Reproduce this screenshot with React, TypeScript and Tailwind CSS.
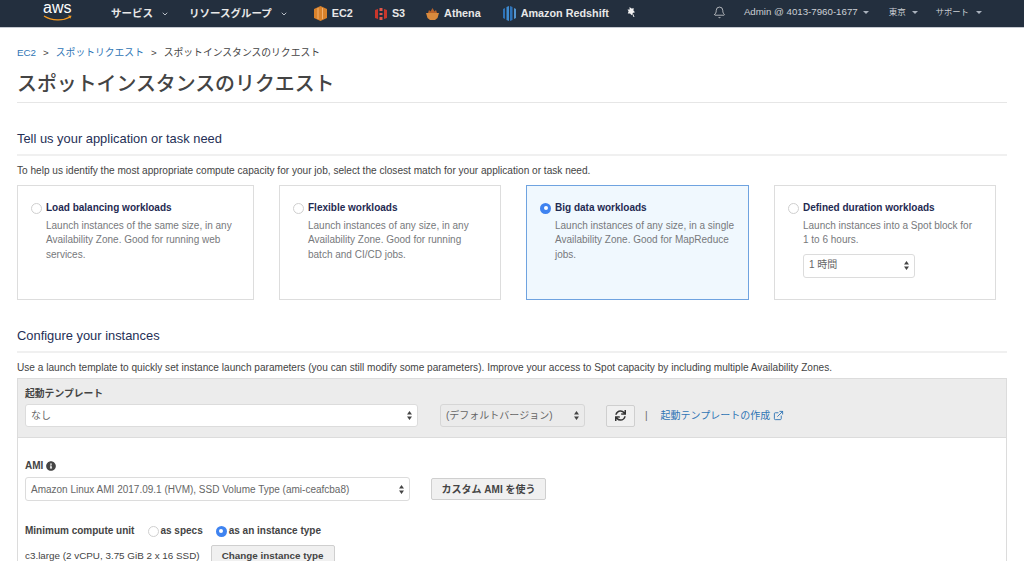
import { Bell, ChevronDown } from "lucide-react";
import { FaInfoCircle, FaSync } from "react-icons/fa";
import { FiExternalLink } from "react-icons/fi";

const font = "font-['Liberation_Sans','Noto_Sans_CJK_JP',sans-serif]";

function Caret({ className = "" }: { className?: string }) {
  return (
    <svg width="6" height="3" viewBox="0 0 6 3" className={className}>
      <path d="M0 0h6L3 3z" fill="#aab2bd" />
    </svg>
  );
}

function Radio({ checked = false, className = "" }: { checked?: boolean; className?: string }) {
  if (checked) {
    return (
      <span className={`flex h-[11px] w-[11px] shrink-0 items-center justify-center rounded-full bg-[#3f83f0] ${className}`}>
        <span className="h-[4px] w-[4px] rounded-full bg-white" />
      </span>
    );
  }
  return <span className={`h-[11px] w-[11px] shrink-0 rounded-full border border-[#cfcfcf] bg-white ${className}`} />;
}

function Updown() {
  return (
    <svg width="5" height="9" viewBox="0 0 5 9" className="shrink-0">
      <path d="M2.5 0L5 3.4H0zM2.5 9L0 5.6h5z" fill="#444" />
    </svg>
  );
}

function Select({ text, className, disabled = false }: { text: string; className: string; disabled?: boolean }) {
  return (
    <div
      className={`flex items-center justify-between rounded-[3px] border pl-[5px] pr-[5px] text-[10px] text-[#666] ${
        disabled ? "border-[#d6d6d6] bg-[#ebebeb]" : "border-[#dcdcdc] bg-white"
      } ${className}`}
    >
      <span>{text}</span>
      <Updown />
    </div>
  );
}

function Card({ title, body, checked, className, children }: {
  title: string;
  body: string[];
  checked?: boolean;
  className: string;
  children?: React.ReactNode;
}) {
  return (
    <div
      className={`h-[115px] shrink-0 border pl-[13px] pt-[15px] ${
        checked ? "border-[#6fa3e0] bg-[#f0f8fe]" : "border-[#dddddd] bg-white"
      } ${className}`}
    >
      <div className="flex items-center gap-[4px]">
        <Radio checked={checked} />
        <span className="text-[10px] font-bold leading-[14px] text-[#1f2a52]">{title}</span>
      </div>
      <div className="mt-[4px] pl-[15px] text-[10px] leading-[14.3px] text-[#77797c]">
        {body.map((b) => (
          <div key={b}>{b}</div>
        ))}
        {children}
      </div>
    </div>
  );
}

function SectionHead({ title, className }: { title: string; className: string }) {
  return (
    <div className={`mr-[17px] border-b-2 border-[#f0f0f0] text-[12.9px] leading-[16px] text-[#252f56] ${className}`}>
      {title}
    </div>
  );
}

function TopNav() {
  return (
    <nav className="flex h-[28px] shrink-0 items-center border-b border-[#c5c9d0] bg-[#232f3e] text-[10.5px] text-[#e8e8e8]">
      <div className="relative ml-[43px] h-[27px] w-[30px]">
        <span className="absolute left-0 top-[-1px] text-[16px] leading-[18px] text-white">aws</span>
        <svg width="30" height="7" viewBox="0 0 30 7" className="absolute left-0 top-[15px]">
          <path d="M1 1c8 5 19 5 26 1" fill="none" stroke="#f79a1e" strokeWidth="1.3" />
          <path d="M25 .6l3.6.2-1.4 3z" fill="#f79a1e" />
        </svg>
      </div>
      <span className="ml-[38px] font-bold">サービス</span>
      <ChevronDown size={8} strokeWidth={3} className="ml-[8px] text-[#b8bec6]" />
      <span className="ml-[20px] font-bold">リソースグループ</span>
      <ChevronDown size={8} strokeWidth={3} className="ml-[8px] text-[#b8bec6]" />

      <svg width="13" height="15" viewBox="0 0 13 15" className="ml-[26px]">
        <path d="M6.5 0L13 3v9l-6.5 3L0 12V3z" fill="#d9822b" />
        <path d="M4 2v11M8.5 2v11" stroke="#f0b070" strokeWidth="1" />
      </svg>
      <span className="ml-[5px] text-[10.8px] font-bold">EC2</span>

      <svg width="12" height="14" viewBox="0 0 12 14" className="ml-[22px]">
        <path d="M0 3l3-1v10l-3-1zM12 3L9 2v10l3-1z" fill="#c9362b" />
        <path d="M4.5 1h3v3h-3zM4.5 6h3v2h-3zM4.5 10h3v3h-3z" fill="#e0574a" />
      </svg>
      <span className="ml-[5px] text-[10.8px] font-bold">S3</span>

      <svg width="13" height="13" viewBox="0 0 13 13" className="ml-[21px]">
        <path d="M0 6h13l-1.5 5-2.5 2H4l-2.5-2z" fill="#d98a3d" />
        <path d="M2 6l1-3 1.5 1.5L6.5 1l2 3.5L10 3l1 3z" fill="#b8622a" />
      </svg>
      <span className="ml-[5px] text-[10.8px] font-bold">Athena</span>

      <svg width="13" height="15" viewBox="0 0 13 15" className="ml-[22px]">
        <path d="M0 3l2-1v11l-2-1z" fill="#2e73b8" />
        <path d="M3.5 1L6 0v15l-2.5-1z" fill="#3f8bd0" />
        <path d="M7 0l2.5 1v13L7 15z" fill="#2e73b8" />
        <path d="M11 2l2 1v9l-2 1z" fill="#5294cf" />
      </svg>
      <span className="ml-[5px] text-[10.8px] font-bold">Amazon Redshift</span>

      <svg width="10" height="11" viewBox="0 0 10 11" className="ml-[17px] mb-[2px]">
        <path d="M3.5 0l2 1.5 2.300-.3-.4 2.300L9 5.300l-2.400.7-1 2.200-1.500-1.700-2.300 0 .8-2.200L1.500 2.500l2.200 0z" fill="#f2f2f2" />
        <path d="M6.5 6.5L8 10" stroke="#f2f2f2" strokeWidth="1" />
      </svg>

      <Bell size={13} strokeWidth={1.3} className="ml-[77px] mb-[2px] text-[#e8e8e8]" />
      <div className="mb-[2px] ml-[18px] flex items-center text-[9.7px] font-normal text-[#ccd0d5]">
        <span>Admin @ 4013-7960-1677</span>
        <Caret className="ml-[5px]" />
        <span className="ml-[20px] text-[8.5px]">東京</span>
        <Caret className="ml-[6px]" />
        <span className="ml-[18px] text-[8.3px]">サポート</span>
        <Caret className="ml-[7px]" />
      </div>
    </nav>
  );
}

export default function App() {
  return (
    <div className={`flex h-[561px] w-[1024px] flex-col overflow-hidden bg-white ${font}`}>
      <TopNav />
      <main className="pl-[17px]">
        <div className="mt-[18px] flex items-center text-[9.8px] leading-[14px] text-[#444]">
          <span className="text-[#2f75b5]">EC2</span>
          <span className="mx-[7px]">&gt;</span>
          <span className="text-[#2f75b5]">スポットリクエスト</span>
          <span className="mx-[7px]">&gt;</span>
          <span>スポットインスタンスのリクエスト</span>
        </div>
        <h1 className="mr-[17px] mt-[11px] h-[32px] border-b border-[#e6e6e6] text-[19.9px] font-medium leading-[26px] text-[#444]">
          スポットインスタンスのリクエスト
        </h1>

        <SectionHead title="Tell us your application or task need" className="mt-[28px] h-[25px]" />
        <p className="mt-[8px] text-[10.1px] leading-[14px] text-[#444]">
          To help us identify the most appropriate compute capacity for your job, select the closest match for your application or task need.
        </p>
        <div className="mt-[7px] flex gap-[25px]">
          <Card
            className="w-[237px]"
            title="Load balancing workloads"
            body={["Launch instances of the same size, in any", "Availability Zone. Good for running web", "services."]}
          />
          <Card
            className="w-[222px]"
            title="Flexible workloads"
            body={["Launch instances of any size, in any", "Availability Zone. Good for running", "batch and CI/CD jobs."]}
          />
          <Card
            checked
            className="w-[223px]"
            title="Big data workloads"
            body={["Launch instances of any size, in a single", "Availability Zone. Good for MapReduce", "jobs."]}
          />
          <Card
            className="w-[222px]"
            title="Defined duration workloads"
            body={["Launch instances into a Spot block for", "1 to 6 hours."]}
          >
            <Select text="1 時間" className="mt-[6px] h-[24px] w-[112px]" />
          </Card>
        </div>

        <SectionHead title="Configure your instances" className="mt-[28px] h-[25px]" />
        <p className="mt-[8px] text-[10.1px] leading-[14px] text-[#444]">
          Use a launch template to quickly set instance launch parameters (you can still modify some parameters). Improve your access to Spot capacity by including multiple Availability Zones.
        </p>
        <section className="mt-[3px] w-[990px] border-x border-t border-[#dcdcdc]">
          <div className="h-[59px] border-b border-[#dcdcdc] bg-[#ececec] px-[7px] pt-[8px]">
            <div className="text-[9.8px] font-bold leading-[13px] text-[#444]">起動テンプレート</div>
            <div className="mt-[4px] flex items-center">
              <Select text="なし" className="h-[23px] w-[393px]" />
              <Select text="(デフォルトバージョン)" disabled className="ml-[22px] h-[23px] w-[145px]" />
              <button className="ml-[21px] flex h-[22px] w-[29px] items-center justify-center rounded-[2px] border border-[#cfcfcf] bg-[#f0f0f0]">
                <FaSync size={11} className="text-[#333]" />
              </button>
              <span className="ml-[10px] text-[10px] text-[#666]">|</span>
              <span className="ml-[13px] text-[10px] text-[#2f75b5]">起動テンプレートの作成</span>
              <FiExternalLink size={11} className="ml-[3px] text-[#2f75b5]" />
            </div>
          </div>
          <div className="h-[130px] px-[7px] pt-[21px]">
            <div className="flex items-center gap-[3px] text-[10px] font-bold leading-[14px] text-[#444]">
              AMI
              <FaInfoCircle size={10} className="text-[#444]" />
            </div>
            <div className="mt-[4px] flex items-center">
              <Select text="Amazon Linux AMI 2017.09.1 (HVM), SSD Volume Type (ami-ceafcba8)" className="h-[24px] w-[385px]" />
              <button className="ml-[21px] h-[22px] w-[115px] rounded-[2px] border border-[#cfcfcf] bg-[#f0f0f0] text-[10px] font-bold text-[#444]">
                カスタム AMI を使う
              </button>
            </div>
            <div className="mt-[23px] flex items-center text-[10px] font-bold leading-[14px] text-[#444]">
              Minimum compute unit
              <Radio className="ml-[14px] mr-[1px]" />
              as specs
              <Radio checked className="ml-[13px] mr-[2px]" />
              as an instance type
            </div>
            <div className="mt-[7px] flex items-center text-[9.85px] text-[#444]">
              c3.large (2 vCPU, 3.75 GiB 2 x 16 SSD)
              <button className="ml-[11px] h-[22px] w-[124px] rounded-[2px] border border-[#cfcfcf] bg-[#f0f0f0] font-bold">
                Change instance type
              </button>
            </div>
          </div>
        </section>
      </main>
    </div>
  );
}
